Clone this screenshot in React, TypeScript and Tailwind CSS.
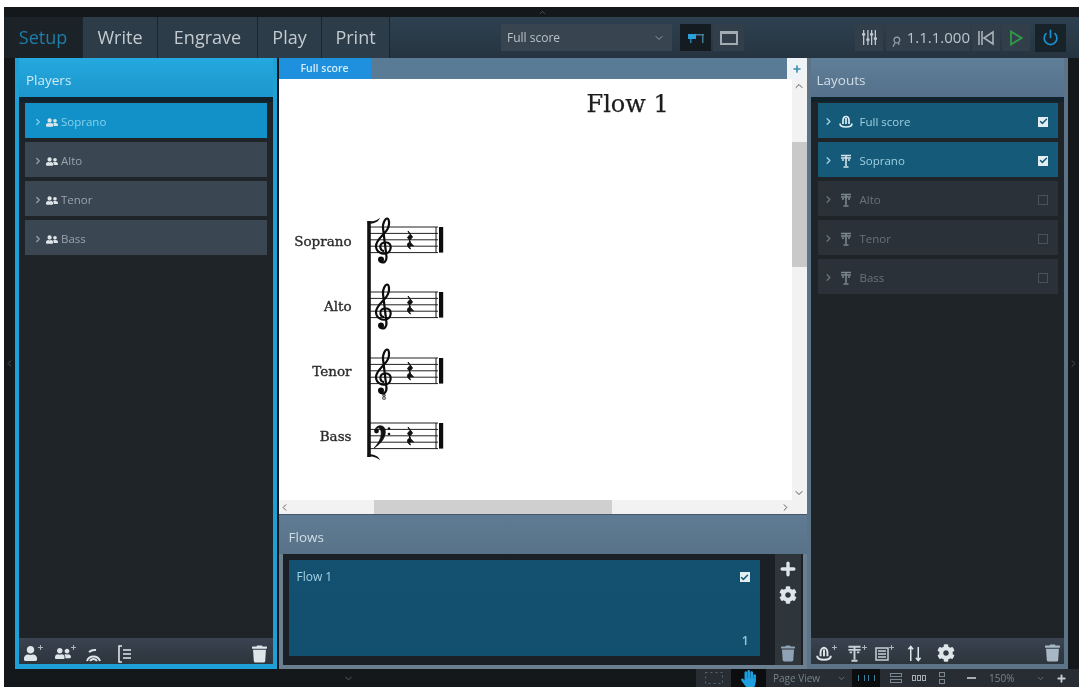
import { Check, ChevronDown, ChevronLeft, ChevronRight, ChevronUp, Plus, Power } from 'lucide-react'
import { FaCog, FaHandPaper, FaTrash, FaUser, FaUserFriends } from 'react-icons/fa'

const ui = 'font-["Open_Sans",sans-serif]'

const tabs = [
  { label: 'Setup', width: 'w-[79px]', on: true },
  { label: 'Write', width: 'w-[75px]', on: false },
  { label: 'Engrave', width: 'w-[100px]', on: false },
  { label: 'Play', width: 'w-[64px]', on: false },
  { label: 'Print', width: 'w-[68px]', on: false },
]

const players = ['Soprano', 'Alto', 'Tenor', 'Bass']

const layouts = [
  { label: 'Full score', on: true, full: true },
  { label: 'Soprano', on: true, full: false },
  { label: 'Alto', on: false, full: false },
  { label: 'Tenor', on: false, full: false },
  { label: 'Bass', on: false, full: false },
]

function StandIcon({ className }: { className: string }) {
  return (
    <svg viewBox="0 0 12 14" className={className} fill="none" stroke="currentColor">
      <path d="M1 1.500h10M1 4h10" strokeWidth="1.6" />
      <path d="M6 1v11M3.500 13h5" strokeWidth="1.6" />
      <path d="M2 6h2M8 6h2" strokeWidth="1.4" />
    </svg>
  )
}

function ScoreIcon({ className }: { className: string }) {
  return (
    <svg viewBox="0 0 14 13" className={className} fill="none" stroke="currentColor" strokeWidth="1.7">
      <path d="M1 8.500C1 11 3 12 7 12s6-1 6-3.500" />
      <path d="M4 9V5.500C4 3 5.500 1.500 7 1.500S10 3 10 5.500V9M7 3v6" />
    </svg>
  )
}

function TinyPlus() {
  return (
    <svg viewBox="0 0 5 5" className="mb-[12px] h-[5px] w-[5px]" stroke="#aab4bc" strokeWidth="1">
      <path d="M2.500 0v5M0 2.500h5" />
    </svg>
  )
}

function Box({ on }: { on: boolean }) {
  if (!on) return <span className="h-[10px] w-[10px] border border-[#48535b]" />
  return (
    <span className="flex h-[10px] w-[10px] items-center justify-center bg-[#e3eef2] text-[#155a78]">
      <Check className="h-[9px] w-[9px]" strokeWidth={4} />
    </span>
  )
}

function Clef({ x, y }: { x: number; y: number }) {
  return (
    <g transform={`translate(${x} ${y})`}>
      <path
        d="M6 43.500C10 46 13 43 12.400 38L9 10C8.500 6 11 0.500 13 0.500 15.200 0.500 15.800 6 14 10 12.500 15 2 21 2 28 2 34 8 36.500 12 35.500 17.500 34 18.500 26 13 24.500 8 23.500 5.500 27 6.500 30 7 32 9 33 10 33"
        fill="none"
        stroke="#0c0c0c"
        strokeWidth="2.2"
      />
      <circle cx="7" cy="41.500" r="3" fill="#0c0c0c" />
    </g>
  )
}

function Rest({ y }: { y: number }) {
  return (
    <path
      d={`M408 ${y + 4}l4.500 6-3.500 4 4.500 5c-3-1-5 0-3 3-4.500-3-3.500-6 0-7.500l-3-4 2.500-3z`}
      fill="#111"
      stroke="#111"
      strokeWidth="1"
    />
  )
}

function System() {
  const tops = [227, 292, 358, 423]
  return (
    <svg viewBox="365 214 82 250" className="h-[250px] w-[82px]">
      {tops.map((t) => (
        <g key={t}>
          {[0, 1, 2, 3, 4].map((i) => (
            <line key={i} x1="370" x2="438" y1={t + i * 6.4} y2={t + i * 6.4} stroke="#222" strokeWidth="1" />
          ))}
          <line x1="436" x2="436" y1={t} y2={t + 25.6} stroke="#111" strokeWidth="1" />
          <rect x="439" y={t} width="4.200" height="25.6" fill="#0c0c0c" />
          <Rest y={t} />
        </g>
      ))}
      <path d="M369 221V457" stroke="#111" strokeWidth="3.600" />
      <path d="M367.500 221.500C373 221.500 377 221 380 217.500 379 222 374 223.500 368 224Z" fill="#111" />
      <path d="M367.500 456.500C373 456.500 377 457 380 460.500 379 456 374 454.500 368 454Z" fill="#111" />
      <Clef x={374} y={218} />
      <Clef x={374} y={284} />
      <Clef x={374} y={349} />
      <text x="382" y="400" fontSize="8" fontWeight="700" fontFamily="Liberation Serif, serif" fill="#222">8</text>
      <path d="M375 430C376 425 383 424 385 429 387 436 381 444 374 448 379 443 382 437 381 431 380 427 377 427 376 430" fill="#111" stroke="#111" strokeWidth="0.7" />
      <circle cx="376.500" cy="431" r="2.400" fill="#111" />
      <circle cx="389" cy="428.500" r="1.300" fill="#111" />
      <circle cx="389" cy="434" r="1.300" fill="#111" />
    </svg>
  )
}

function Score() {
  return (
    <div className="flex h-[435px] flex-col bg-white">
      <div className="flex min-h-0 flex-1">
        <div className="min-w-0 flex-1 font-['DejaVu_Serif',serif] text-[#1c1c1c]">
          <div className="pl-[308px] pt-[9px] text-[24px] leading-[32px] [-webkit-text-stroke:0.25px_#1c1c1c]">Flow 1</div>
          <div className="mt-[94px] flex">
            <div className="w-[73px] pt-[15px] text-right text-[13.5px] font-medium text-[#2b2b2b] [-webkit-text-stroke:0.35px_#2b2b2b]">
              {['Soprano', 'Alto', 'Tenor', 'Bass'].map((n) => (
                <div key={n} className="h-[65px] leading-[24px]">{n}</div>
              ))}
            </div>
            <div className="ml-[13px]">
              <System />
            </div>
          </div>
        </div>
        <div className="flex w-[15px] flex-col items-center bg-[#f2f2f2] text-[#555]">
          <ChevronUp className="mt-[1px] h-[12px] w-[12px]" />
          <div className="mt-[50px] h-[125px] w-full bg-[#c9c9c9]" />
          <div className="flex-1" />
          <ChevronDown className="mb-[1px] h-[12px] w-[12px]" />
        </div>
      </div>
      <div className="flex h-[14px] items-center bg-[#f2f2f2] text-[#555]">
        <ChevronLeft className="h-[11px] w-[11px]" />
        <div className="ml-[84px] h-full w-[238px] bg-[#cfcfcf]" />
        <div className="flex-1" />
        <ChevronRight className="mr-[16px] h-[11px] w-[11px]" />
      </div>
    </div>
  )
}

function StatusIcons() {
  return (
    <div className="flex h-full w-[383px] items-center bg-[#272d33] text-[10px] text-[#77838c]">
      <div className="flex h-full w-[35px] items-center justify-center">
        <svg viewBox="0 0 18 12" className="h-[12px] w-[18px]" fill="none" stroke="#5a6670" strokeDasharray="2 3">
          <rect x="0.5" y="0.5" width="17" height="11" />
        </svg>
      </div>
      <div className="flex h-full w-[35px] items-center justify-center bg-[#0b0d0f]">
        <FaHandPaper className="h-[17px] w-[15px] text-[#1f9fe0]" />
      </div>
      <span className="ml-[7px] w-[64px]">Page View</span>
      <ChevronDown className="h-[9px] w-[9px]" />
      <div className="ml-[6px] flex h-full w-[28px] items-center justify-center bg-[#0b0d0f]">
        <span className="h-[6px] w-[7px] border-x border-[#3c7f9e]" />
        <span className="ml-[3px] h-[6px] w-[7px] border-x border-[#3c7f9e]" />
      </div>
      <div className="ml-[10px] flex w-[12px] flex-col gap-[2px]">
        <span className="h-[4px] border border-[#7b8790]" />
        <span className="h-[4px] border border-[#7b8790]" />
      </div>
      <div className="ml-[10px] flex w-[15px] gap-[1px]">
        <span className="h-[6px] w-[4px] border border-[#a3adb5]" />
        <span className="h-[6px] w-[4px] border border-[#a3adb5]" />
        <span className="h-[6px] w-[4px] border border-[#a3adb5]" />
      </div>
      <div className="ml-[12px] flex w-[6px] flex-col gap-[2px]">
        <span className="h-[5px] border border-[#7b8790]" />
        <span className="h-[5px] border border-[#7b8790]" />
      </div>
      <span className="ml-[22px] h-[2px] w-[9px] bg-[#a3adb5]" />
      <span className="ml-[13px] w-[47px]">150%</span>
      <ChevronDown className="h-[9px] w-[9px]" />
      <Plus className="ml-[11px] h-[11px] w-[11px] text-[#c3ccd2]" strokeWidth={4} />
    </div>
  )
}

export default function App() {
  return (
    <div className={`h-[687px] w-[1082px] overflow-hidden bg-white pl-[4px] pr-[3px] pt-[7px] blur-[0.6px] ${ui}`}>
      <div className="flex h-[680px] flex-col bg-[#15181b]">
        <div className="flex h-[10px] items-center justify-center pl-[1px]">
          <ChevronUp className="h-[9px] w-[9px] text-[#56606a]" />
        </div>

        <div className="flex h-[41px] items-center bg-gradient-to-b from-[#2e4150] to-[#263440] pr-[4px]">
          {tabs.map((t) => (
            <div
              key={t.label}
              className={`flex h-full items-center justify-center border-r border-[#1b252d] text-[18px] ${t.width} ${
                t.on ? 'bg-[#1b2329] text-[#1f7ea8]' : 'bg-[#2d3c49] text-[#c3cbd0]'
              }`}
            >
              {t.label}
            </div>
          ))}
          <div className="ml-[111px] flex h-[27px] w-[171px] items-center justify-between bg-[#38444f] pl-[6px] pr-[7px] text-[12px] text-[#b9c2c9]">
            <span>Full score</span>
            <ChevronDown className="h-[12px] w-[12px] text-[#929ca4]" />
          </div>
          <div className="ml-[8px] flex h-[27px] w-[31px] items-center justify-center bg-[#141c22]">
            <svg viewBox="0 0 18 12" className="h-[12px] w-[18px]">
              <rect x="1" y="2" width="8" height="5" fill="#2a9fdc" />
              <rect x="9" y="2" width="8" height="1.5" fill="#4a7a94" />
              <rect x="3" y="7" width="1.5" height="4" fill="#2a7fa8" />
              <rect x="15" y="3" width="1.5" height="8" fill="#4a7a94" />
            </svg>
          </div>
          <div className="ml-[2px] flex h-[27px] w-[31px] items-center justify-center bg-[#323f4b]">
            <span className="h-[14px] w-[18px] border-2 border-t-[3px] border-[#a2abb2]" />
          </div>

          <div className="ml-[111px] flex h-[27px] w-[28px] items-center justify-center bg-[#323f4b]">
            <svg viewBox="0 0 16 16" className="h-[17px] w-[17px]" fill="none" stroke="#c3cbd0" strokeWidth="1.2">
              <path d="M2.500 1v14M6.500 1v14M10 1v14M13.500 1v14" />
              <path d="M1 5h3M5 10h3M8.500 5h3M12 9h3" strokeWidth="2" />
            </svg>
          </div>
          <div className="ml-[3px] flex h-[27px] w-[84px] items-center bg-[#323f4b] pl-[6px]">
            <svg viewBox="0 0 10 12" className="mt-[8px] h-[12px] w-[10px]" fill="none" stroke="#9ba5ad" strokeWidth="1.2">
              <circle cx="5" cy="4" r="3" />
              <path d="M3 7l-2 4M7 7v2" />
            </svg>
            <span className="ml-[5px] text-[15px] text-[#bcc5cb]">1.1.1.000</span>
          </div>
          <div className="ml-[2px] flex h-[27px] w-[28px] items-center justify-center bg-[#323f4b]">
            <svg viewBox="0 0 18 16" className="h-[16px] w-[18px]" fill="none" stroke="#a9b2b9" strokeWidth="1.6">
              <path d="M2 1v14M5 1v14M16 2L7 8l9 6z" />
            </svg>
          </div>
          <div className="ml-[2px] flex h-[27px] w-[28px] items-center justify-center bg-[#323f4b]">
            <svg viewBox="0 0 14 16" className="h-[16px] w-[14px]" fill="none" stroke="#2f9a48" strokeWidth="1.8">
              <path d="M2 1.500v13L12.500 8z" />
            </svg>
          </div>
          <div className="ml-[5px] flex h-[28px] w-[31px] items-center justify-center bg-[#182229]">
            <Power className="h-[17px] w-[17px] text-[#1b8fd0]" strokeWidth={2.4} />
          </div>
        </div>

        <div className="flex h-[611px]">
          <div className="flex w-[11px] items-center justify-center">
            <ChevronLeft className="h-[11px] w-[11px] text-[#4a545c]" />
          </div>

          {/* players */}
          <div className="flex w-[262px] flex-col border-x-[4px] border-b-[5px] border-[#1e9fd6] bg-[#1e9fd6]">
            <div className="flex h-[39px] items-center bg-gradient-to-b from-[#25a9df] to-[#1c96cc] pl-[7px] pt-[6px] text-[13.5px] text-[#cfeaf6]">
              Players
            </div>
            <div className="flex flex-1 flex-col gap-[4px] bg-[#1f2428] px-[6px] pt-[6px] [box-shadow:inset_0_5px_0_#10222c]">
              {players.map((p, i) => (
                <div
                  key={p}
                  className={`flex h-[35px] items-center pl-[8px] pt-[3px] text-[11.5px] ${
                    i === 0 ? 'bg-[#1191c8] text-[#86d0ea]' : 'bg-[#3b4653] text-[#98a3ab]'
                  }`}
                >
                  <ChevronRight className="h-[10px] w-[10px]" strokeWidth={3} />
                  <FaUserFriends className="ml-[3px] h-[11px] w-[12px] text-[#dfe6ea]" />
                  <span className="ml-[3px]">{p}</span>
                </div>
              ))}
            </div>
            <div className="flex h-[26px] items-center bg-gradient-to-b from-[#3a4350] to-[#2c343c] pl-[4px] pr-[6px] pt-[5px] text-[#dfe6ea]">
              <FaUser className="h-[15px] w-[15px]" />
              <TinyPlus />
              <FaUserFriends className="ml-[12px] h-[15px] w-[16px]" />
              <TinyPlus />
              <svg viewBox="0 0 18 16" className="ml-[9px] h-[16px] w-[18px]" fill="none" stroke="currentColor" strokeWidth="2">
                <path d="M2 15a7 7 0 0 1 13 0M5 15a4 4 0 0 1 7 0M4 6a9 9 0 0 1 7-2" />
              </svg>
              <svg viewBox="0 0 14 18" className="ml-[15px] h-[18px] w-[14px]" fill="none" stroke="currentColor" strokeWidth="1.6">
                <path d="M4 1H1v16h3M5 5h8M5 9h8M5 13h8" />
              </svg>
              <div className="flex-1" />
              <FaTrash className="h-[18px] w-[15px]" />
            </div>
          </div>

          {/* score and flows */}
          <div className="ml-[2px] flex w-[529px] flex-col">
            <div className="flex h-[21px] bg-[#5a7b96]">
              <div className="flex w-[92px] items-center justify-center bg-[#1f90dd] text-[10.5px] font-semibold text-[#d4ecfa]">
                Full score
              </div>
              <div className="flex-1" />
              <div className="flex w-[20px] items-center justify-center bg-[#eef3f5]">
                <Plus className="h-[10px] w-[10px] text-[#3b8fb0]" strokeWidth={4} />
              </div>
            </div>
            <Score />
            <div className="flex h-[40px] items-center border-t border-[#46586a] bg-gradient-to-b from-[#5f7b93] to-[#587389] pl-[10px] pt-[5px] text-[13.5px] text-[#d3dde4]">
              Flows
            </div>
            <div className="flex h-[115px] border-x-[4px] border-b-[4px] border-[#6b7f90] bg-[#1a2025] pr-[1px]">
              <div className="flex flex-1 pb-[9px] pl-[6px] pt-[6px]">
                <div className="flex flex-1 flex-col bg-gradient-to-b from-[#14506f] to-[#12506f] px-[8px] py-[8px] text-[12px] text-[#a6d3e4]">
                  <div className="flex items-center justify-between">
                    <span>Flow 1</span>
                    <span className="mr-[2px]"><Box on /></span>
                  </div>
                  <div className="flex-1" />
                  <div className="mr-[3px] text-right font-semibold leading-[14px] text-[#8fcbe0]">1</div>
                </div>
              </div>
              <div className="ml-[15px] flex w-[26px] flex-col items-center bg-[#2e353b] pb-[3px] pt-[5px] text-[#dfe6ea]">
                <Plus className="h-[20px] w-[20px]" strokeWidth={4} />
                <FaCog className="mt-[7px] h-[18px] w-[18px]" />
                <div className="flex-1" />
                <FaTrash className="h-[17px] w-[14px] text-[#90a3b6]" />
              </div>
              <div className="w-[1px]" />
            </div>
          </div>

          {/* layouts */}
          <div className="flex w-[262px] flex-col border-x-[4px] border-b-[5px] border-[#5d7388] bg-[#5d7388]">
            <div className="flex h-[39px] items-center bg-gradient-to-b from-[#5f7f99] to-[#55708a] pl-[6px] pt-[6px] text-[13.5px] text-[#d3dde4]">
              Layouts
            </div>
            <div className="flex flex-1 flex-col gap-[4px] bg-[#1f2428] pl-[7px] pr-[6px] pt-[6px] [box-shadow:inset_0_5px_0_#10222c]">
              {layouts.map((l) => (
                <div
                  key={l.label}
                  className={`flex h-[35px] items-center pl-[5px] pr-[10px] pt-[2px] text-[11.5px] ${
                    l.on ? 'bg-[#155a78] text-[#9fd0e2]' : 'bg-[#2a3138] text-[#68737b]'
                  }`}
                >
                  <ChevronRight className="h-[11px] w-[11px]" strokeWidth={3} />
                  {l.full ? (
                    <ScoreIcon className="ml-[5px] h-[13px] w-[14px] text-[#e0eef3]" />
                  ) : (
                    <StandIcon className={`ml-[6px] h-[14px] w-[12px] ${l.on ? 'text-[#d4e4ea]' : 'text-[#7b868e]'}`} />
                  )}
                  <span className={l.full ? 'ml-[7px]' : 'ml-[8px]'}>{l.label}</span>
                  <div className="flex-1" />
                  <Box on={l.on} />
                </div>
              ))}
            </div>
            <div className="flex h-[26px] items-center bg-gradient-to-b from-[#3a4350] to-[#2c343c] pl-[5px] pr-[4px] pt-[4px] text-[#dfe6ea]">
              <ScoreIcon className="h-[15px] w-[16px]" />
              <TinyPlus />
              <StandIcon className="ml-[10px] h-[17px] w-[15px] text-[#c7d0d6]" />
              <TinyPlus />
              <svg viewBox="0 0 14 16" className="ml-[8px] h-[16px] w-[14px]" fill="none" stroke="#c7d0d6" strokeWidth="1.5">
                <path d="M1 3h12v12H1zM3 6h8M3 9h8M3 12h8" />
              </svg>
              <TinyPlus />
              <svg viewBox="0 0 16 18" className="ml-[13px] h-[17px] w-[15px]" fill="none" stroke="currentColor" strokeWidth="1.6">
                <path d="M4 17V2M1.500 4.500L4 1.500l2.500 3M12 2v14M9.500 13.500L12 16.500l2.500-3" />
              </svg>
              <FaCog className="ml-[15px] h-[18px] w-[18px]" />
              <div className="flex-1" />
              <FaTrash className="h-[18px] w-[15px] text-[#a9b8c6]" />
            </div>
          </div>

          <div className="flex flex-1 items-center justify-center">
            <ChevronRight className="h-[11px] w-[11px] text-[#4a545c]" />
          </div>
        </div>

        <div className="flex h-[18px] items-center justify-between">
          <ChevronDown className="ml-[339px] h-[11px] w-[11px] text-[#5a646c]" />
          <StatusIcons />
        </div>
      </div>
    </div>
  )
}
